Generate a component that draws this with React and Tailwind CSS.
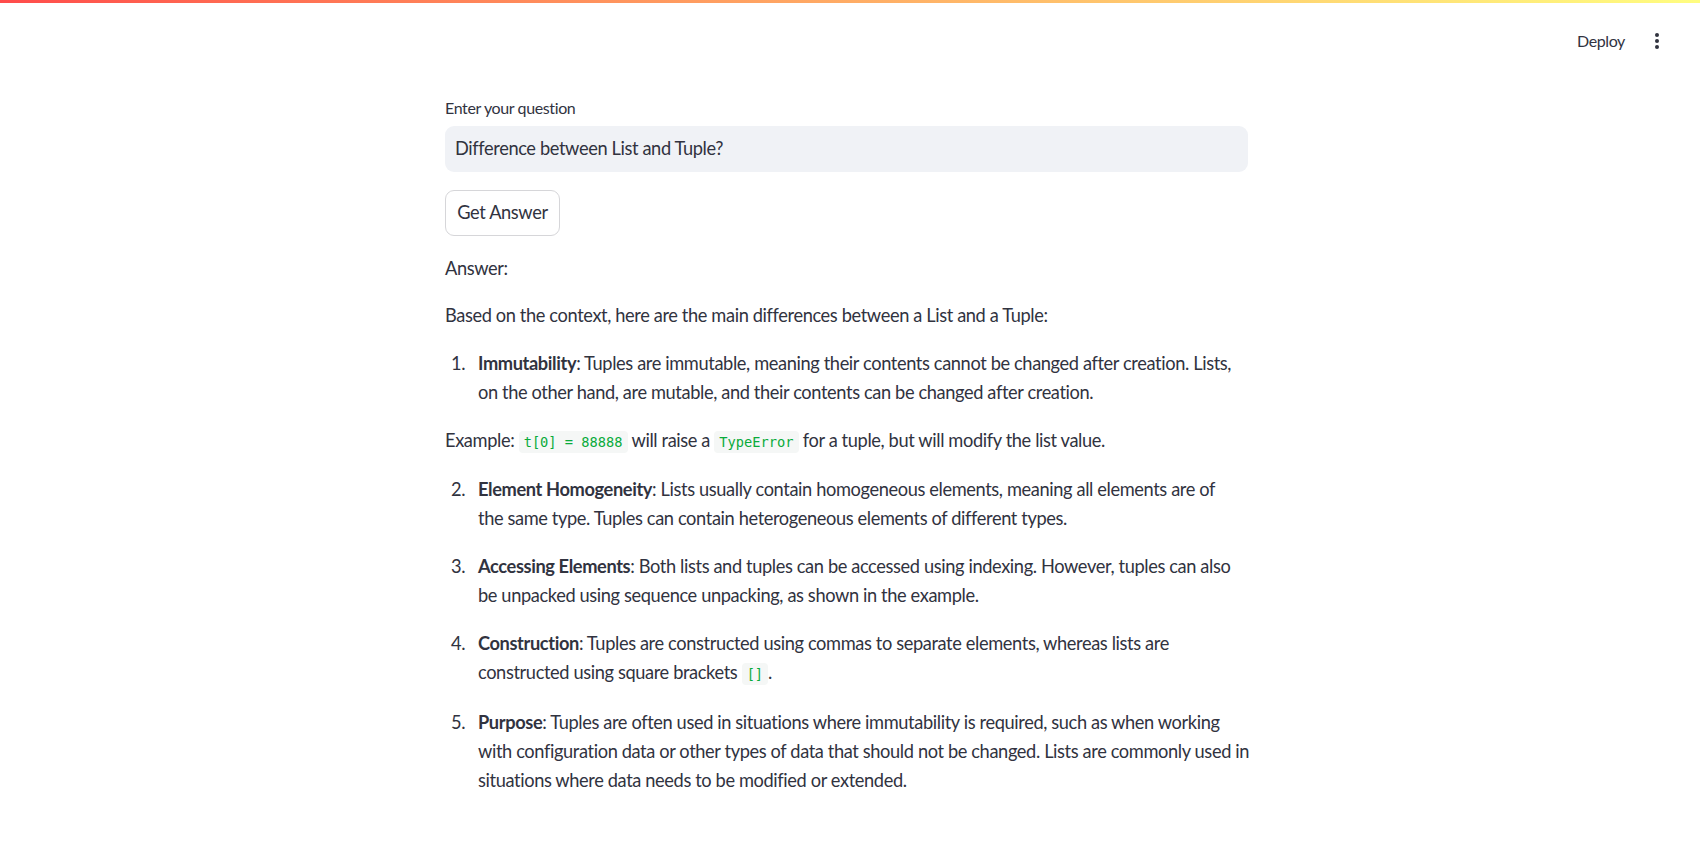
import React from "react";

const Code = ({ children }) => (
  <code className="rounded-[4px] bg-[#f5f7f6] px-[5px] py-[3px] text-[13.7px] tracking-normal text-[#09ab3b] [font-family:'DejaVu_Sans_Mono',monospace]">
    {children}
  </code>
);

// lines are split where the reference wraps them
const Item = ({ n, title, lines }) => (
  <div className="flex">
    <span className="w-[33px] shrink-0 pl-[6px]">{n}.</span>
    <p className="whitespace-nowrap">
      {lines.map((line, i) => (
        <span key={i} className="block">
          {i === 0 && (
            <>
              <strong className="font-bold">{title}</strong>:{" "}
            </>
          )}
          {line}
        </span>
      ))}
    </p>
  </div>
);

const App = () => {
  return (
    <div className="min-h-screen bg-white text-[#31333f] tracking-[-0.38px] [font-family:Lato,'Liberation_Sans',sans-serif]">
      <div className="h-[3px] w-full bg-gradient-to-r from-[#ff4b4b] to-[#fffd80]" />

      <header className="flex h-[76px] items-center justify-end gap-[30px] pr-[41px] text-[16px]">
        <button className="text-[#31333f]">Deploy</button>
        <div className="flex flex-col gap-[2px]">
          <span className="h-[4px] w-[4px] rounded-full bg-[#31333f]" />
          <span className="h-[4px] w-[4px] rounded-full bg-[#31333f]" />
          <span className="h-[4px] w-[4px] rounded-full bg-[#31333f]" />
        </div>
      </header>

      <main className="ml-[445px] w-[803px] pt-[16px] text-[18.24px] leading-[29.2px]">
        <label className="block text-[16px] leading-[25.6px]">Enter your question</label>
        <div className="mt-[5px] flex h-[46px] items-center rounded-[9px] bg-[#f0f2f6] px-[10px]">
          Difference between List and Tuple?
        </div>

        <button className="mt-[18px] h-[46px] w-[115px] rounded-[9px] border border-[#d6d6d9] bg-white">
          Get Answer
        </button>

        <div className="mt-[18px] flex flex-col gap-[18.4px]">
          <p>Answer:</p>
          <p>Based on the context, here are the main differences between a List and a Tuple:</p>
          <Item
            n={1}
            title="Immutability"
            lines={[
              "Tuples are immutable, meaning their contents cannot be changed after creation. Lists,",
              "on the other hand, are mutable, and their contents can be changed after creation.",
            ]}
          />
          <p>
            Example: <Code>t[0] = 88888</Code> will raise a <Code>TypeError</Code> for a tuple, but will modify the list value.
          </p>
          <Item
            n={2}
            title="Element Homogeneity"
            lines={[
              "Lists usually contain homogeneous elements, meaning all elements are of",
              "the same type. Tuples can contain heterogeneous elements of different types.",
            ]}
          />
          <Item
            n={3}
            title="Accessing Elements"
            lines={[
              "Both lists and tuples can be accessed using indexing. However, tuples can also",
              "be unpacked using sequence unpacking, as shown in the example.",
            ]}
          />
          <Item
            n={4}
            title="Construction"
            lines={[
              "Tuples are constructed using commas to separate elements, whereas lists are",
              <>
                constructed using square brackets <Code>[]</Code>.
              </>,
            ]}
          />
          <Item
            n={5}
            title="Purpose"
            lines={[
              "Tuples are often used in situations where immutability is required, such as when working",
              "with configuration data or other types of data that should not be changed. Lists are commonly used in",
              "situations where data needs to be modified or extended.",
            ]}
          />
        </div>
      </main>
    </div>
  );
};

export default App;
